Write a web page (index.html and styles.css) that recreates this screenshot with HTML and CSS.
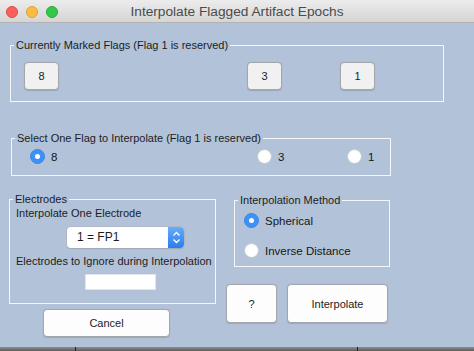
FILE: index.html
```html
<!DOCTYPE html>
<html lang="en">
<head>
    <meta charset="UTF-8">
    <meta name="viewport" content="width=device-width, initial-scale=1.0">
    <title>Interpolate Flagged Artifact Epochs</title>
    <link rel="stylesheet" href="styles.css">
</head>
<body>
    <div class="window">
        <div class="titlebar">
            <div class="lights">
                <span class="light red"></span>
                <span class="light yellow"></span>
                <span class="light green"></span>
            </div>
            <div class="title">Interpolate Flagged Artifact Epochs</div>
        </div>

        <div class="content">
            <!-- Flags currently marked -->
            <fieldset class="group group-flags">
                <legend>Currently Marked Flags (Flag 1 is reserved)</legend>
                <div class="flag-row">
                    <button class="btn btn-flag">8</button>
                    <button class="btn btn-flag">3</button>
                    <button class="btn btn-flag">1</button>
                </div>
            </fieldset>

            <!-- Flag to interpolate -->
            <fieldset class="group group-select">
                <legend>Select One Flag to Interpolate (Flag 1 is reserved)</legend>
                <div class="radio-row">
                    <label class="radio-option"><span class="radio checked"></span>8</label>
                    <label class="radio-option"><span class="radio"></span>3</label>
                    <label class="radio-option"><span class="radio"></span>1</label>
                </div>
            </fieldset>

            <div class="bottom-row">
                <div class="col-left">
                    <fieldset class="group group-electrodes">
                        <legend>Electrodes</legend>
                        <div class="field-label first">Interpolate One Electrode</div>
                        <div class="select">
                            <span class="select-value">1 = FP1</span>
                            <span class="select-arrows">
                                <svg width="9" height="13" viewBox="0 0 9 13">
                                    <path d="M1.5 4.5 L4.5 1.5 L7.5 4.5" fill="none" stroke="#fff" stroke-width="1.4"/>
                                    <path d="M1.5 8.5 L4.5 11.5 L7.5 8.5" fill="none" stroke="#fff" stroke-width="1.4"/>
                                </svg>
                            </span>
                        </div>
                        <div class="field-label">Electrodes to Ignore during Interpolation</div>
                        <input class="text-input" type="text">
                    </fieldset>
                    <button class="btn btn-cancel">Cancel</button>
                </div>

                <div class="col-right">
                    <fieldset class="group group-method">
                        <legend>Interpolation Method</legend>
                        <label class="radio-option method"><span class="radio checked"></span>Spherical</label>
                        <label class="radio-option method second"><span class="radio"></span>Inverse Distance</label>
                    </fieldset>
                    <div class="action-row">
                        <button class="btn btn-help">?</button>
                        <button class="btn btn-run">Interpolate</button>
                    </div>
                </div>
            </div>
        </div>

        <div class="shadow">
            <span class="mark mark-a"></span>
            <span class="mark mark-b"></span>
        </div>
    </div>
</body>
</html>
```

FILE: styles.css
```css
* {
    box-sizing: border-box;
}
body {
    margin: 0;
    font-family: "Liberation Sans", Arial, sans-serif;
    font-size: 11px;
    color: #1c1c1c;
    background: #6f6f6f;
}
.window {
    width: 474px;
    height: 351px;
    display: flex;
    flex-direction: column;
    overflow: hidden;
}
.titlebar {
    height: 23px;
    flex: none;
    position: relative;
    display: flex;
    align-items: center;
    justify-content: center;
    background: linear-gradient(#ececec, #d5d5d5);
    border-bottom: 1px solid #b3b3b3;
}
.lights {
    position: absolute;
    left: 6px;
    top: 6px;
    display: flex;
    gap: 8px;
}
.light {
    width: 12px;
    height: 12px;
    border-radius: 50%;
}
.light.red {
    background: #fc605b;
    border: 1px solid #df4744;
}
.light.yellow {
    background: #fdbc40;
    border: 1px solid #dea034;
}
.light.green {
    background: #34c84a;
    border: 1px solid #28a837;
}
.title {
    font-size: 13.7px;
    color: #4b4b4b;
    margin-top: 1px;
}
.content {
    flex: 1;
    background: #b2c3d9;
}

/* groups */
.group {
    margin: 0;
    padding: 0;
    border: 1px solid #f4f6f9;
    min-width: 0;
}
.group legend {
    margin-left: 3px;
    padding: 0 2px;
    line-height: 13px;
    font-size: 11px;
}
.group-flags {
    margin: 16px 0 0 10px;
    width: 434px;
    padding-bottom: 11px;
}
.group-select {
    margin: 30px 0 0 11px;
    width: 380px;
    padding-bottom: 11px;
}

/* buttons */
.btn {
    font-family: inherit;
    font-size: 11px;
    color: #1c1c1c;
    padding: 0;
    border: 1px solid #a3a6ac;
    border-radius: 4px;
    background: #fdfdfd;
    box-shadow: 0 0.5px 1px rgba(0,0,0,0.15);
}
.flag-row {
    display: grid;
    grid-template-columns: 223px 93px 35px;
    margin: 10px 0 0 13px;
}
.btn-flag {
    width: 35px;
    height: 28px;
    background: #f1f1f1;
}

/* radios */
.radio-row {
    display: grid;
    grid-template-columns: 227px 90px auto;
    margin: 4px 0 0 18px;
}
.radio-option {
    display: flex;
    align-items: center;
    gap: 6px;
    height: 15px;
    font-size: 11.5px;
    color: #161616;
}
.radio {
    width: 15px;
    height: 15px;
    border-radius: 50%;
    background: #fff;
    border: 1px solid #c4c7cc;
    flex: none;
    display: flex;
    align-items: center;
    justify-content: center;
}
.radio.checked {
    background: #3c92f6;
    border-color: #3a86e6;
}
.radio.checked::after {
    content: "";
    width: 5px;
    height: 5px;
    border-radius: 50%;
    background: #fff;
}

/* bottom area */
.bottom-row {
    display: flex;
    margin: 17px 0 0 9px;
}
.col-left {
    width: 207px;
}
.col-right {
    margin-left: 10px;
}
.group-electrodes {
    width: 207px;
    padding-bottom: 13px;
}
.field-label {
    margin: 7px 0 0 6px;
    line-height: 13px;
    font-size: 11px;
}
.field-label.first {
    margin-top: 1px;
}
.select {
    margin: 7px 0 0 57px;
    width: 117px;
    height: 21px;
    display: flex;
    border-radius: 4px;
    background: #fff;
    box-shadow: 0 0 0 0.5px #a9acb2, 0 1px 1px rgba(0,0,0,0.15);
    overflow: hidden;
}
.select-value {
    flex: 1;
    padding-left: 10px;
    font-size: 12px;
    line-height: 21px;
}
.select-arrows {
    width: 16px;
    display: flex;
    align-items: center;
    justify-content: center;
    background: linear-gradient(#66adf9, #2b7cf0);
}
.text-input {
    display: block;
    margin: 6px 0 0 75px;
    width: 71px;
    height: 16px;
    border: 1px solid #e1e5eb;
    background: #fff;
    padding: 0;
}
.btn-cancel {
    margin: 5px 0 0 34px;
    width: 127px;
    height: 28px;
}
.group-method {
    margin: 1px 0 0 8px;
    width: 156px;
    padding-bottom: 8px;
}
.radio-option.method {
    margin: 6px 0 0 9px;
}
.radio-option.method.second {
    margin-top: 15px;
}
.action-row {
    display: flex;
    gap: 10px;
    margin-top: 17px;
}
.btn-help {
    width: 51px;
    height: 39px;
}
.btn-run {
    width: 101px;
    height: 39px;
}

/* desktop shadow below the window */
.shadow {
    height: 4px;
    flex: none;
    position: relative;
    background: linear-gradient(#8d8d8d, #5c5c5c);
}
.mark {
    position: absolute;
    top: 0;
    bottom: 0;
    width: 1px;
    background: #1e1e1e;
}
.mark-a {
    left: 75px;
}
.mark-b {
    left: 357px;
}
```
